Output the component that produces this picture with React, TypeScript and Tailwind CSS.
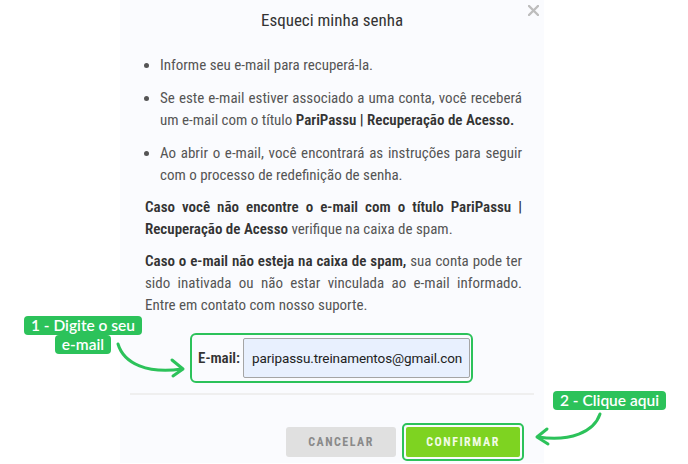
import React from 'react';

const GREEN = '#2cc25a';

function Callout({ children }: { children: React.ReactNode }) {
  return (
    <span className="bg-[#2cc25a] text-white rounded-[4px] px-[7px] leading-[19px] text-[15.5px] whitespace-nowrap">
      {children}
    </span>
  );
}

export default function App() {
  return (
    <div className="relative w-[688px] h-[464px] bg-white overflow-hidden font-['Roboto_Condensed','Liberation_Sans_Narrow','Roboto',sans-serif]">
      <div className="ml-[120px] w-[424px] h-[463px] bg-[#fafbfe] relative">
        {/* close */}
        <svg className="absolute right-[5px] top-[5px]" width="11" height="11" viewBox="0 0 11 11">
          <path d="M1 1 L10 10 M10 1 L1 10" stroke="#bdbdbd" strokeWidth="2.4" strokeLinecap="round" />
        </svg>

        <h2 className="pt-[8px] text-center text-[17px] text-[#333] leading-[24px]">Esqueci minha senha</h2>

        <div className="pl-[25px] pr-[22px] pt-[22px] text-[15px] leading-[22px] text-[#555] text-justify">
          <ul className="list-disc pl-[15px] marker:text-[#555] flex flex-col gap-[11px]">
            <li>Informe seu e-mail para recuperá-la.</li>
            <li>
              Se este e-mail estiver associado a uma conta, você receberá um e-mail com o título{' '}
              <b className="text-[#333] font-semibold">PariPassu | Recuperação de Acesso.</b>
            </li>
            <li>Ao abrir o e-mail, você encontrará as instruções para seguir com o processo de redefinição de senha.</li>
          </ul>
          <p className="mt-[10px]">
            <b className="text-[#333] font-semibold">Caso você não encontre o e-mail com o título PariPassu | Recuperação de Acesso</b>{' '}
            verifique na caixa de spam.
          </p>
          <p className="mt-[10px]">
            <b className="text-[#333] font-semibold">Caso o e-mail não esteja na caixa de spam,</b> sua conta pode ter sido inativada
            ou não estar vinculada ao e-mail informado. Entre em contato com nosso suporte.
          </p>
        </div>

        {/* email field */}
        <div className="mt-[17px] ml-[70px] w-[283px] h-[50px] border-2 border-[#2cc25a] rounded-[6px] flex items-center pl-[6px] gap-[3px]">
          <label className="text-[15px] font-semibold text-[#333]">E-mail:</label>
          <div className="w-[227px] h-[40px] bg-[#e8f0fe] border border-[#a5a5a5] rounded-[2px] flex items-center pl-[8px] text-[13.5px] tracking-[-0.1px] text-[#222] font-['Roboto',sans-serif] whitespace-nowrap overflow-hidden">
            paripassu.treinamentos@gmail.con
          </div>
        </div>

        <div className="mt-[10px] mx-[10px] border-t-2 border-[#efefef]" />

        <div className="mt-[32px] flex gap-[6px] pl-[166px]">
          <button className="w-[110px] h-[30px] bg-[#e0e0e0] rounded-[3px] text-[12px] font-bold tracking-[1.5px] text-[#8a8a8a]">
            CANCELAR
          </button>
          <div className="-mt-[4px] p-[2px] border-2 border-[#2cc25a] rounded-[5px] bg-[#fafbfe]">
            <button className="w-[114px] h-[30px] bg-[#7ed321] rounded-[2px] text-[12px] font-bold tracking-[1.5px] text-[#f2fbe6]">
              CONFIRMAR
            </button>
          </div>
        </div>
      </div>

      {/* annotation 1 */}
      <div className="absolute left-[24px] top-[316px] w-[118px] flex flex-col items-center font-['Lato',sans-serif] font-semibold">
        <Callout>1 - Digite o seu</Callout>
        <Callout>e-mail</Callout>
      </div>
      <svg className="absolute left-[110px] top-[340px]" width="80" height="40" viewBox="0 0 80 40" fill="none">
        <path d="M8 4 C 14 24, 38 34, 72 29" stroke={GREEN} strokeWidth="3" strokeLinecap="round" />
        <path d="M62 20 L73 29 L63 36" stroke={GREEN} strokeWidth="3" strokeLinecap="round" strokeLinejoin="round" />
      </svg>

      {/* annotation 2 */}
      <div className="absolute left-[553px] top-[391px] flex font-['Lato',sans-serif] font-semibold">
        <Callout>2 - Clique aqui</Callout>
      </div>
      <svg className="absolute left-[530px] top-[410px]" width="80" height="40" viewBox="0 0 80 40" fill="none">
        <path d="M70 4 C 64 22, 40 32, 8 27" stroke={GREEN} strokeWidth="3" strokeLinecap="round" />
        <path d="M17 19 L7 27 L18 34" stroke={GREEN} strokeWidth="3" strokeLinecap="round" strokeLinejoin="round" />
      </svg>
    </div>
  );
}
